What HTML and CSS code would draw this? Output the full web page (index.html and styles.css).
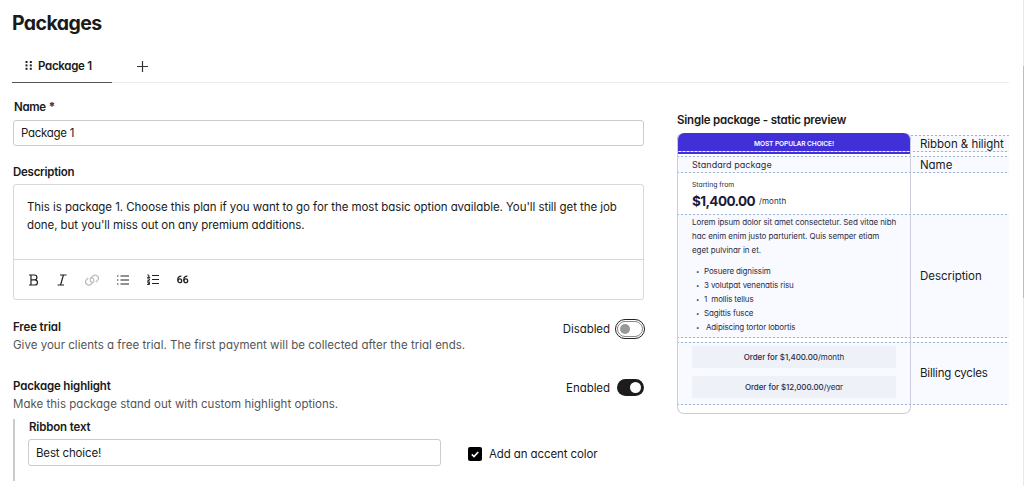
FILE: index.html
```html
<!DOCTYPE html>
<html lang="en">
<head>
    <meta charset="UTF-8">
    <meta name="viewport" content="width=device-width, initial-scale=1.0">
    <title>Packages</title>
    <link rel="stylesheet" href="styles.css">
</head>
<body>
    <div class="scrollbar"><div class="thumb"></div></div>

    <h1>Packages</h1>

    <div class="tabs">
        <div class="tab active">
            <svg class="grip" width="8" height="9" viewBox="0 0 8 9" fill="#222">
                <rect x="0.5" y="0" width="2" height="2"/><rect x="4.8" y="0" width="2" height="2"/>
                <rect x="0.5" y="3.4" width="2" height="2"/><rect x="4.8" y="3.4" width="2" height="2"/>
                <rect x="0.5" y="6.8" width="2" height="2"/><rect x="4.8" y="6.8" width="2" height="2"/>
            </svg>
            <span class="tab-name">Package 1</span>
        </div>
        <button class="add-tab">
            <svg width="11" height="11" viewBox="0 0 11 11" stroke="#333" stroke-width="1.2"><path d="M5.5 0v11M0 5.5h11"/></svg>
        </button>
    </div>

    <div class="content">
        <div class="form">
            <div class="label name-label">Name <b class="required">*</b></div>
            <div class="input package-name">Package 1</div>

            <div class="label desc-label">Description</div>
            <div class="editor">
                <div class="editor-text">
                    <span>This is package 1. Choose this plan if you want to go for the most basic option available. You'll still get the job</span><br>
                    <span>done, but you'll miss out on any premium additions.</span>
                </div>
                <div class="toolbar">
                    <svg width="10" height="12" viewBox="0 0 10 12" fill="none" stroke="#222" stroke-width="1.2"><path d="M0 1h5.5a2.4 2.4 0 0 1 0 4.8H2M5.8 5.8a2.6 2.6 0 0 1 0 5.2H0M2 1v10"/></svg>
                    <svg width="10" height="12" viewBox="0 0 10 12" fill="none" stroke="#222" stroke-width="1.2"><path d="M3 1h6.5M0.5 11H7M6.4 1L3.6 11"/></svg>
                    <svg width="14" height="12" viewBox="0 0 14 12" fill="none" stroke="#b5b5b5" stroke-width="1.1"><path d="M7.6 8.6A3 3 0 0 1 5.4 4.4L7.6 2.2a3.2 3.2 0 0 1 4.9 4.2L10.8 8.1M6.4 3.6A3 3 0 0 1 8.6 7.8L6.4 9.9A3.2 3.2 0 0 1 1.5 5.7L3.2 4"/></svg>
                    <svg width="12" height="10" viewBox="0 0 12 10" stroke="#222" stroke-width="1.2"><path d="M3.5 1H12M3.5 5H12M3.5 9H12M0 1h1.4M0 5h1.4M0 9h1.4"/></svg>
                    <svg width="12" height="11" viewBox="0 0 12 11" fill="none" stroke="#222" stroke-width="1.2"><path d="M5 1.5h7M5 5.5h7M5 9.5h7"/><path d="M0.4 1h1.4v2.4M0.2 3.4h3M0.4 4.8h2v1.2L0.4 7h2.4M0.2 8.2h2.3v2.3H0.2M0.8 9.3h1.7" stroke-width="1"/></svg>
                    <svg width="12" height="9" viewBox="0 0 12 9" fill="none" stroke="#222" stroke-width="1.3"><circle cx="2.8" cy="5.8" r="1.9"/><circle cx="8.8" cy="5.8" r="1.9"/><path d="M0.9 5.8V4Q0.9 1.2 4.4 1.2M6.9 5.8V4Q6.9 1.2 10.4 1.2"/></svg>
                </div>
            </div>

            <div class="option trial">
                <div>
                    <div class="label">Free trial</div>
                    <div class="hint">Give your clients a free trial. The first payment will be collected after the trial ends.</div>
                </div>
                <div class="switch-row">Disabled<span class="switch off"><i></i></span></div>
            </div>

            <div class="option highlight">
                <div>
                    <div class="label">Package highlight</div>
                    <div class="hint">Make this package stand out with custom highlight options.</div>
                </div>
                <div class="switch-row">Enabled<span class="switch on"><i></i></span></div>
            </div>

            <div class="nested">
                <div class="ribbon-field">
                    <div class="label">Ribbon text</div>
                    <div class="input">Best choice!</div>
                </div>
                <div class="accent">
                    <span class="checkbox"><svg width="8" height="7" viewBox="0 0 8 7" fill="none" stroke="#fff" stroke-width="1.6"><path d="M0.8 3.4L3 5.5L7.2 1"/></svg></span>
                    <span>Add an accent color</span>
                </div>
            </div>
        </div>

        <div class="preview">
            <div class="label preview-title">Single package - static preview</div>
            <div class="package">
                <div class="row row-ribbon">
                    <div class="cell ribbon">MOST POPULAR CHOICE!</div>
                    <div class="note">Ribbon &amp; hilight</div>
                </div>
                <div class="row row-name">
                    <div class="cell">Standard package</div>
                    <div class="note">Name</div>
                </div>
                <div class="row-price">
                    <div class="starting">Starting from</div>
                    <div class="price"><span class="amount">$1,400.00</span><span>/month</span></div>
                </div>
                <div class="row row-desc">
                    <div class="cell">
                        <div class="lorem">
                            <span>Lorem ipsum dolor sit amet consectetur. Sed vitae nibh</span><br>
                            <span>hac enim enim justo parturient. Quis semper etiam</span><br>
                            <span>eget pulvinar in et.</span>
                        </div>
                        <ul>
                            <li>Posuere dignissim</li>
                            <li>3 volutpat venenatis risu</li>
                            <li>1&nbsp; mollis tellus</li>
                            <li>Sagittis fusce</li>
                            <li class="indent">Adipiscing tortor lobortis</li>
                        </ul>
                    </div>
                    <div class="note">Description</div>
                </div>
                <div class="row row-billing">
                    <div class="cell">
                        <div class="order"><b>Order for $1,400.00</b>/month</div>
                        <div class="order"><b>Order for $12,000.00</b>/year</div>
                    </div>
                    <div class="note">Billing cycles</div>
                </div>
                <div class="outline"></div>
            </div>
        </div>
    </div>
</body>
</html>
```
FILE: styles.css
```css
* {
    box-sizing: border-box;
}
body {
    margin: 0;
    height: 486px;
    overflow: hidden;
    padding: 0 15px 0 12px;
    font-family: Inter, "Liberation Sans", sans-serif;
    font-feature-settings: "cv11";
    font-size: 11.5px;
    letter-spacing: -0.06px;
    white-space: nowrap;
    color: #1a1a1a;
    background: #fff;
}
h1 {
    margin: 0;
    padding-top: 10px;
    height: 51px;
    font-size: 19.5px;
    letter-spacing: -0.6px;
    line-height: 26px;
    font-weight: 700;
}
.scrollbar {
    position: absolute;
    top: 0;
    right: 0;
    width: 1px;
    height: 486px;
    padding-top: 66px;
    background: #e9e9e9;
}
.thumb {
    height: 232px;
    background: #bdbdbd;
}
.tabs {
    display: flex;
    height: 32px;
    border-bottom: 1px solid #ebebeb;
}
.tab {
    display: flex;
    align-items: center;
    gap: 5px;
    width: 100px;
    height: 32px;
    padding: 0 0 2px 13px;
    font-weight: 600;
    letter-spacing: -0.3px;
    border-bottom: 1px solid #555;
}
.add-tab {
    display: flex;
    margin: 10px 0 0 25px;
    padding: 0;
    border: none;
    background: none;
}
.content {
    display: flex;
    gap: 33px;
    padding-left: 1px;
}
.form {
    flex: none;
    width: 631px;
}
.label {
    font-weight: 600;
    line-height: 18px;
    letter-spacing: -0.15px;
}
.name-label {
    padding: 15px 0 0 1px;
    height: 37px;
    letter-spacing: -0.3px;
}
.required {
    color: #7a2a22;
}
.input {
    display: flex;
    align-items: center;
    height: 26px;
    padding: 0 7px 1px;
    border: 1px solid #ccc;
    border-radius: 3px;
}
.package-name {
    letter-spacing: -0.28px;
}
.desc-label {
    padding-top: 17px;
    height: 38px;
    letter-spacing: -0.25px;
}
.editor {
    height: 116px;
    border: 1px solid #d8d8d8;
    border-radius: 3px;
}
.editor-text {
    height: 74px;
    padding: 13px;
    line-height: 18px;
    letter-spacing: -0.06px;
}
.toolbar {
    display: flex;
    align-items: center;
    gap: 18px;
    height: 40px;
    padding-left: 15px;
    border-top: 1px solid #d8d8d8;
}
.option {
    display: flex;
    justify-content: space-between;
    height: 59px;
}
.trial {
    margin-top: 18px;
}
.hint {
    color: #555;
    line-height: 19px;
    letter-spacing: 0.02px;
}
.switch-row {
    display: flex;
    align-items: center;
    gap: 7px;
    height: 21px;
}
.switch {
    display: flex;
    align-items: center;
    width: 26px;
    height: 16px;
    border-radius: 9px;
}
.switch i {
    width: 11px;
    height: 11px;
    border-radius: 50%;
}
.off {
    margin-right: 1px;
    padding-left: 2px;
    border: 1px solid #888;
    outline: 1px solid #222;
    outline-offset: 1px;
}
.switch.off i {
    width: 10px;
    height: 10px;
    background: #999;
}
.on {
    justify-content: flex-end;
    width: 27px;
    height: 17px;
    padding-right: 3px;
    background: #1c1c1c;
}
.on i {
    background: #fff;
}
.nested {
    display: flex;
    gap: 27px;
    height: 62px;
    margin-top: -17px;
    padding-left: 14px;
    border-left: 2px solid #ccc;
}
.ribbon-field {
    width: 413px;
    margin-left: -1px;
}
.ribbon-field .label {
    height: 20px;
    padding-left: 1px;
    line-height: 17px;
}
.ribbon-field .input {
    height: 27px;
    padding-bottom: 0;
    letter-spacing: -0.15px;
}
.accent {
    display: flex;
    align-items: center;
    gap: 7px;
    height: 30px;
    margin-top: 20px;
    letter-spacing: -0.1px;
}
.checkbox {
    display: flex;
    align-items: center;
    justify-content: center;
    width: 14px;
    height: 14px;
    border-radius: 2px;
    background: #000;
}
.preview {
    flex: none;
    width: 332px;
    padding-top: 28px;
}
.preview-title {
    height: 22px;
    letter-spacing: -0.2px;
}
.package {
    position: relative;
    width: 332px;
    height: 281px;
    font-size: 8px;
    letter-spacing: -0.08px;
    color: #2c2c44;
}
.row {
    position: relative;
    display: flex;
    background: #f8faff;
}
/* dotted guide lines above and below each section */
.row::before, .row::after {
    content: "";
    position: absolute;
    left: 0;
    right: 0;
    height: 1px;
    background: repeating-linear-gradient(90deg, #9fb6d8 0 2px, #edf2fb 2px 4px);
}
.row::before {
    top: 0;
}
.row::after {
    bottom: 0;
}
.cell {
    width: 234px;
    padding: 1px 15px;
}
.note {
    display: flex;
    align-items: center;
    padding-left: 9px;
    font-size: 11.5px;
    letter-spacing: -0.05px;
    color: #1a1a1a;
}
.row-ribbon {
    height: 17px;
    margin-bottom: 4px;
    top: 2px;
}
.row-ribbon::before {
    left: 234px;
}
.ribbon {
    display: flex;
    align-items: center;
    justify-content: center;
    height: 21px;
    margin-top: -2px;
    border-radius: 7px 7px 0 0;
    background: #4130d8;
    color: #fff;
    font-size: 6.6px;
    font-weight: 600;
    letter-spacing: -0.1px;
}
.row-name {
    height: 17px;
    margin-top: 6px;
    line-height: 15px;
}
.row-name .cell {
    font-size: 9px;
    letter-spacing: 0.05px;
}
.row-name .note {
    padding-top: 1px;
}
.row-price {
    height: 41px;
    padding: 8px 15px 0;
}
.starting {
    font-size: 6.8px;
    line-height: 8px;
    letter-spacing: 0;
}
.price {
    display: flex;
    align-items: center;
    gap: 4px;
    height: 23px;
    letter-spacing: 0.1px;
}
.amount {
    font-size: 13.5px;
    font-weight: 700;
    letter-spacing: -0.6px;
    color: #1d1b3a;
}
.row-desc {
    height: 124px;
}
.lorem {
    line-height: 14px;
}
ul {
    margin: 7px 0 0;
    padding: 0;
    list-style: none;
}
li {
    height: 14px;
    line-height: 14px;
    letter-spacing: -0.15px;
}
li::before {
    content: "•";
    display: inline-block;
    width: 8px;
    padding-left: 4px;
    font-size: 6px;
}
.indent::before {
    width: 10px;
}
.row-billing {
    height: 63px;
    margin-top: 4px;
}
.row-billing .cell {
    padding-top: 4px;
}
.row-desc .note {
    padding-bottom: 1px;
}
.row-billing .note {
    padding-bottom: 2px;
    letter-spacing: -0.2px;
}
.order {
    height: 22px;
    margin-bottom: 8px;
    line-height: 22px;
    text-align: center;
    background: #eef1f8;
}
.order b {
    font-weight: 500;
}
.outline {
    position: absolute;
    top: 0;
    left: 0;
    width: 234px;
    height: 281px;
    border: 1px solid #c9cddc;
    border-top: none;
    border-radius: 7px;
}
```
